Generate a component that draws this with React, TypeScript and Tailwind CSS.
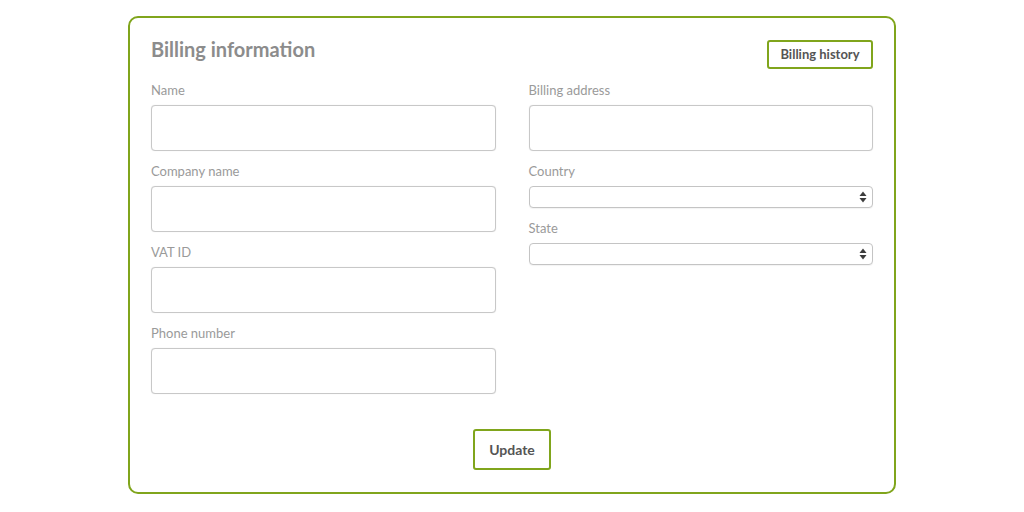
import React from "react";

const font = { fontFamily: "Lato, 'Noto Sans', sans-serif" };

const TextField = ({ label }: { label: string }) => (
  <div className="flex flex-col">
    <label className="text-[13px] leading-[16px] text-[#9a9a9a]">{label}</label>
    <input
      type="text"
      className="mt-[7px] h-[46px] w-full rounded-[4px] border border-[#c8c8c8] bg-white px-3 shadow-[0_0_1px_rgba(0,0,0,0.15)] outline-none"
    />
  </div>
);

const SelectField = ({ label }: { label: string }) => (
  <div className="flex flex-col">
    <label className="text-[13px] leading-[16px] text-[#9a9a9a]">{label}</label>
    <div className="mt-[7px] flex h-[22px] w-full items-center justify-end rounded-[4px] border border-[#c4c4c4] bg-white pr-[5px] shadow-[0_1px_1px_rgba(0,0,0,0.05)]">
      <svg width="8" height="12" viewBox="0 0 8 12" aria-hidden="true">
        <path d="M4 0.5 L7.5 5 L0.5 5 Z" fill="#3c3c3c" />
        <path d="M0.5 7 L7.5 7 L4 11.5 Z" fill="#3c3c3c" />
      </svg>
    </div>
  </div>
);

export default function App() {
  return (
    <div className="min-h-[512px] bg-white pt-[16px]" style={font}>
      <div className="mx-auto flex w-[768px] flex-col rounded-[10px] border-2 border-[#80a51c] px-[21px] pt-[19px] pb-[22px]">
        <div className="flex items-start justify-between">
          <h2 className="text-[20px] leading-[24px] font-bold text-[#8c8c8c]">Billing information</h2>
          <button className="mt-[3px] h-[29px] w-[106px] rounded-[3px] border-2 border-[#80a51c] bg-white text-[13px] font-bold text-[#555]">
            Billing history
          </button>
        </div>

        <div className="mt-[13px] grid grid-cols-2 gap-x-[33px]">
          <div className="flex flex-col gap-[12px]">
            <TextField label="Name" />
            <TextField label="Company name" />
            <TextField label="VAT ID" />
            <TextField label="Phone number" />
          </div>
          <div className="flex flex-col gap-[12px]">
            <TextField label="Billing address" />
            <SelectField label="Country" />
            <SelectField label="State" />
          </div>
        </div>

        <div className="mt-[35px] flex justify-center">
          <button className="h-[41px] w-[78px] rounded-[3px] border-2 border-[#80a51c] bg-white text-[14px] font-bold text-[#555]">
            Update
          </button>
        </div>
      </div>
    </div>
  );
}
